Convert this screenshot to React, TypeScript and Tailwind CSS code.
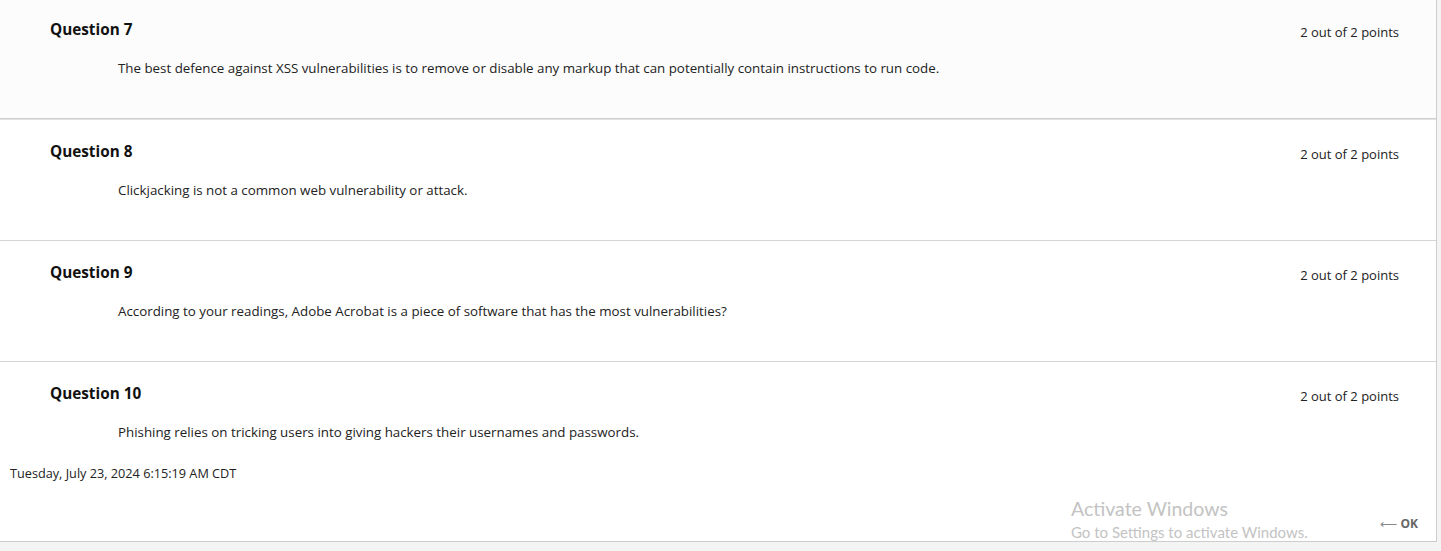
import React from 'react';

const questions = [
  {
    n: 7,
    text: 'The best defence against XSS vulnerabilities is to remove or disable any markup that can potentially contain instructions to run code.',
  },
  { n: 8, text: 'Clickjacking is not a common web vulnerability or attack.' },
  {
    n: 9,
    text: 'According to your readings, Adobe Acrobat is a piece of software that has the most vulnerabilities?',
  },
  {
    n: 10,
    text: 'Phishing relies on tricking users into giving hackers their usernames and passwords.',
  },
];

function QuestionRow({ n, text, first, last }: { n: number; text: string; first?: boolean; last?: boolean }) {
  return (
    <div
      className={
        first
          ? 'flex h-[119px] justify-between bg-[#fcfcfc] pl-[50px] pr-[37px] border-b border-[#cfcfcf] shadow-[0_1px_0_#e3e3e3] mb-[1px]'
          : last
          ? 'flex h-[102px] justify-between bg-white pl-[50px] pr-[37px] pt-[2px]'
          : 'flex h-[121px] justify-between bg-white pl-[50px] pr-[37px] pt-[2px] border-b border-[#d4d4d4]'
      }
    >
      <div className="flex flex-col">
        <h2 className="mt-[19px] text-[15.3px] leading-[20px] font-bold text-[#111]">Question {n}</h2>
        <p className="mt-[20px] ml-[68px] text-[13.33px] leading-[18px] text-[#222]">{text}</p>
      </div>
      <div className="mt-[23px] text-[13px] leading-[18px] text-[#222]">2 out of 2 points</div>
    </div>
  );
}

export default function App() {
  return (
    <div className="relative h-[551px] w-full bg-[#f4f4f4] font-['Open_Sans',sans-serif]">
      <div className="flex h-[542px] w-[1437px] flex-col border-r border-b border-[#cdcdcd] bg-white">
        {questions.map((q, i) => (
          <QuestionRow key={q.n} n={q.n} text={q.text} first={i === 0} last={i === questions.length - 1} />
        ))}
        <div className="px-[10px] text-[12.7px] leading-[18px] text-[#222]">Tuesday, July 23, 2024 6:15:19 AM CDT</div>
        <div className="flex flex-1 items-end justify-end pr-[18px] pb-[8px]">
          <span className="flex items-center gap-[3px] text-[12px] font-bold text-[#666]">
            <span className="font-normal text-[12px] leading-none text-[#888]">⟵</span>OK
          </span>
        </div>
      </div>
      <div className="pointer-events-none absolute left-[1071px] top-[496px] font-['Lato',sans-serif] text-[#c3c3c3]">
        <div className="text-[19.5px] leading-[26px]">Activate Windows</div>
        <div className="text-[15px] leading-[20px]">Go to Settings to activate Windows.</div>
      </div>
    </div>
  );
}
